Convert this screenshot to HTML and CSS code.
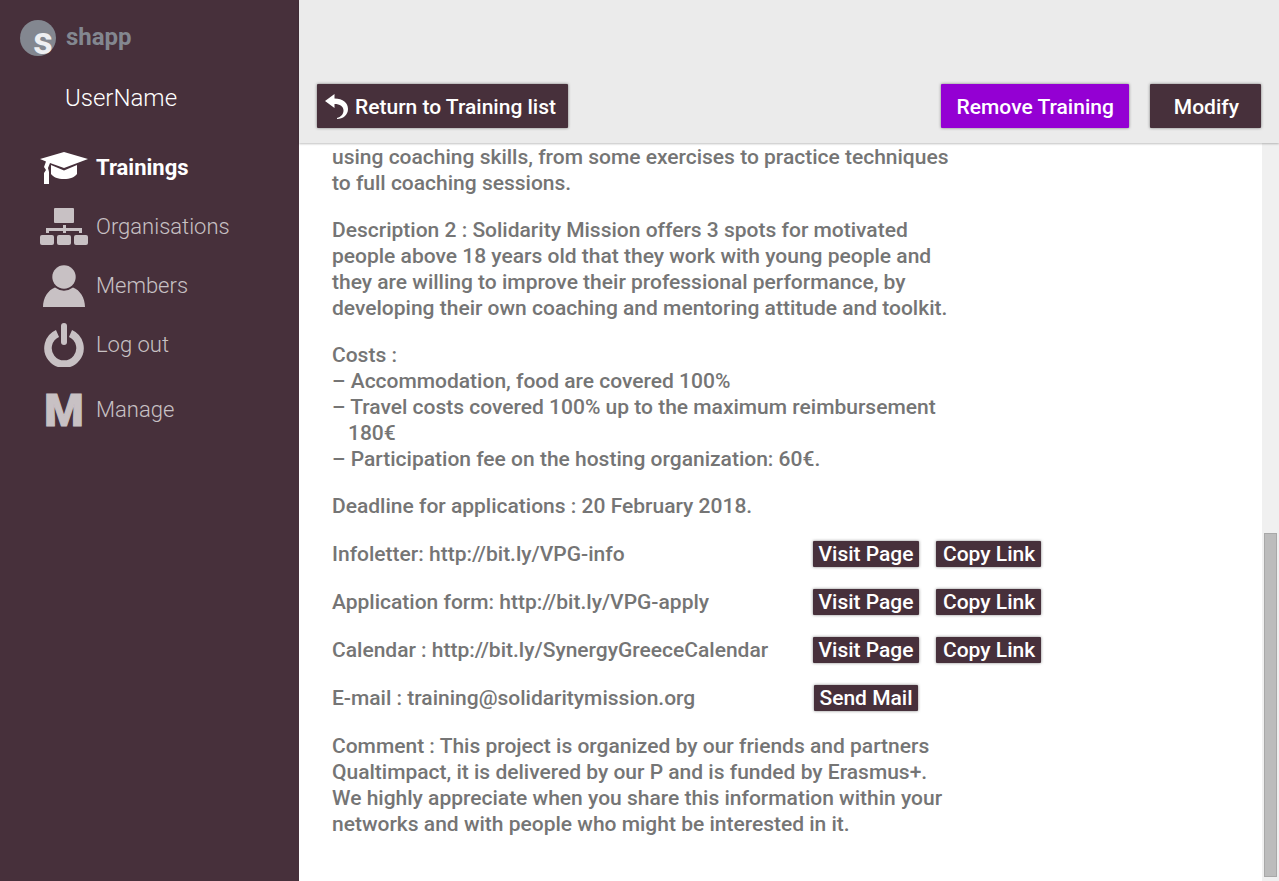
FILE: index.html
```html
<!DOCTYPE html>
<html lang="en">
<head>
<meta charset="utf-8">
<meta name="viewport" content="width=device-width, initial-scale=1">
<title>shapp – Training</title>
<link rel="stylesheet" href="styles.css">
</head>
<body class="app">
<aside class="sidebar">
  <a class="brand" href="#">
    <svg class="brand-logo" viewBox="0 0 36 36" aria-hidden="true">
      <circle cx="18" cy="18" r="18" fill="#838790"/>
      <text x="23" y="34" text-anchor="middle" class="brand-letter">s</text>
    </svg>
    <span class="brand-name">shapp</span>
  </a>
  <div class="user">UserName</div>
  <nav class="nav">
    <a class="nav-item is-active" href="#">
      <svg class="nav-icon" viewBox="0 0 48 44" aria-hidden="true">
        <path d="M0 13 24 6 48 13 24 22 10 17 8 22 9 26V38H4V27L6 24 4 21 6 15.500Z"/>
        <path d="M11 19 24 24.500 37 19V28C35 31 30 33 24 33S13 31 11 28Z"/>
      </svg>
      <span>Trainings</span>
    </a>
    <a class="nav-item" href="#">
      <svg class="nav-icon" viewBox="0 0 48 44" aria-hidden="true">
        <rect x="14" y="3" width="20" height="15" rx="1"/>
        <path d="M23 20h3v3h16v5h-3v-2H26v2h-3v-2H9v2H6v-5h17Z"/>
        <rect x="0" y="30" width="14" height="10" rx="2"/>
        <rect x="17" y="30" width="14" height="10" rx="2"/>
        <rect x="34" y="30" width="14" height="10" rx="2"/>
      </svg>
      <span>Organisations</span>
    </a>
    <a class="nav-item" href="#">
      <svg class="nav-icon" viewBox="0 0 48 44" aria-hidden="true">
        <circle cx="24" cy="13" r="11.7"/>
        <path d="M3 43C3 34 8 26 15 23.500Q24 30 33 23.500C40 26 45 34 45 43Z"/>
      </svg>
      <span>Members</span>
    </a>
    <a class="nav-item" href="#">
      <svg class="nav-icon" viewBox="0 0 48 44" aria-hidden="true">
        <path d="M17.500 10.500A16 16 0 1 0 30.500 10.500" fill="none" stroke="currentColor" stroke-width="7.500"/>
        <path d="M24 1V23" fill="none" stroke="#47303b" stroke-width="10"/>
        <path d="M24 3V19" fill="none" stroke="currentColor" stroke-width="6" stroke-linecap="round"/>
      </svg>
      <span>Log out</span>
    </a>
    <a class="nav-item nav-item-last" href="#">
      <span class="nav-letter" aria-hidden="true">M</span>
      <span>Manage</span>
    </a>
  </nav>
</aside>

<div class="page">
  <header class="toolbar">
    <button class="btn btn-return" type="button">
      <svg class="return-icon" viewBox="0 0 24 26" aria-hidden="true">
        <path d="M0 7 9.500 0V4.500C18 4.500 23 9 23 15C23 21 18 25 12 25V24C16 23 18.500 20 18.500 16.500C18.500 12.500 15 10 9.500 10V14Z" fill="currentColor"/>
      </svg>
      Return to Training list
    </button>
    <button class="btn btn-remove" type="button">Remove Training</button>
    <button class="btn btn-modify" type="button">Modify</button>
  </header>

  <div class="viewport">
    <main class="content">
      <p class="prose">using coaching skills, from some exercises to practice techniques<br>to full coaching sessions.</p>
      <p class="prose">Description 2 : Solidarity Mission offers 3 spots for motivated<br>people above 18 years old that they work with young people and<br>they are willing to improve their professional performance, by<br>developing their own coaching and mentoring attitude and toolkit.</p>
      <div class="prose">
        <p class="line">Costs :</p>
        <ul class="costs">
          <li>– Accommodation, food are covered 100%</li>
          <li>– Travel costs covered 100% up to the maximum reimbursement<br>180€</li>
          <li>– Participation fee on the hosting organization: 60€.</li>
        </ul>
      </div>
      <p class="row">Deadline for applications : 20 February 2018.</p>
      <div class="row">
        <span class="label">Infoletter: http://bit.ly/VPG-info</span>
        <span class="slot"><button class="chip" type="button">Visit Page</button></span>
        <button class="chip chip-copy" type="button">Copy Link</button>
      </div>
      <div class="row">
        <span class="label">Application form: http://bit.ly/VPG-apply</span>
        <span class="slot"><button class="chip" type="button">Visit Page</button></span>
        <button class="chip chip-copy" type="button">Copy Link</button>
      </div>
      <div class="row">
        <span class="label">Calendar : http://bit.ly/SynergyGreeceCalendar</span>
        <span class="slot"><button class="chip" type="button">Visit Page</button></span>
        <button class="chip chip-copy" type="button">Copy Link</button>
      </div>
      <div class="row">
        <span class="label">E-mail : training@solidaritymission.org</span>
        <span class="slot"><button class="chip" type="button">Send Mail</button></span>
      </div>
      <p class="prose">Comment : This project is organized by our friends and partners<br>Qualtimpact, it is delivered by our P and is funded by Erasmus+.<br>We highly appreciate when you share this information within your<br>networks and with people who might be interested in it.</p>
    </main>
    <div class="track"><div class="thumb"></div></div>
  </div>
</div>
</body>
</html>
```
FILE: styles.css
```css
* {
  box-sizing: border-box;
}

.app {
  display: flex;
  min-height: 100vh;
  margin: 0;
  background: #fff;
  color: #757575;
  font-family: Roboto, "Liberation Sans", sans-serif;
  font-size: 21px;
  font-weight: 500;
  line-height: 26px;
}

.sidebar {
  flex: 0 0 299px;
  padding: 20px 20px 0;
  background: #47303b;
}

.brand {
  display: flex;
  align-items: center;
  gap: 10px;
  color: #838790;
  text-decoration: none;
}

.brand-logo {
  width: 36px;
  height: 36px;
  overflow: visible;
}

.brand-letter {
  fill: #eeeff2;
  font-size: 38px;
  font-weight: 700;
}

.brand-name {
  padding-bottom: 2px;
  font-size: 24px;
  font-weight: 700;
}

.user {
  margin-top: 26px;
  padding-left: 45px;
  color: #fff;
  font-size: 24px;
  font-weight: 300;
  line-height: 32px;
}

.nav {
  display: flex;
  flex-direction: column;
  gap: 15px;
  margin-top: 32px;
  padding-left: 20px;
}

.nav-item {
  display: flex;
  align-items: center;
  gap: 8px;
  height: 44px;
  color: #c8c1c4;
  font-size: 22px;
  font-weight: 300;
  text-decoration: none;
}

.nav-item.is-active {
  color: #fff;
  font-weight: 700;
}

.nav-item-last {
  margin-top: 6px;
}

.nav-icon {
  flex: none;
  width: 48px;
  height: 44px;
  fill: currentColor;
}

.nav-letter {
  width: 48px;
  padding-top: 2px;
  font-size: 45px;
  font-weight: 900;
  line-height: 44px;
  text-align: center;
  -webkit-text-stroke: 1px currentColor;
}

.page {
  display: flex;
  flex: 1;
  flex-direction: column;
  min-width: 0;
}

.toolbar {
  display: flex;
  z-index: 1;
  padding: 84px 18px 15px;
  background: #ebebeb;
  box-shadow: 0 1px 2px rgba(0, 0, 0, 0.25);
}

.btn,
.chip {
  border: 0;
  border-radius: 1px;
  background: #47303b;
  box-shadow: 0 0 3px rgba(0, 0, 0, 0.5);
  color: #fff;
  font: inherit;
  white-space: nowrap;
}

.btn {
  height: 44px;
}

.btn-return {
  display: flex;
  align-items: center;
  gap: 6px;
  margin-right: auto;
  padding: 2px 12px 0 8px;
}

.return-icon {
  width: 24px;
  height: 26px;
}

.btn-remove {
  margin-right: 21px;
  padding: 2px 15px 0 16px;
  background: #9400d3;
}

.btn-modify {
  padding: 2px 22px 0 24px;
}

.viewport {
  display: flex;
  flex: 1;
}

.content {
  flex: 1;
  padding: 1px 33px 0;
}

.prose,
.row {
  margin: 0;
}

.prose {
  padding-bottom: 21px;
}

.row {
  display: flex;
  padding-bottom: 22px;
}

.line,
.costs {
  margin: 0;
  padding: 0;
  list-style: none;
}

.costs li {
  padding-left: 16px;
  text-indent: -16px;
}

.label {
  width: 480px;
}

.slot {
  display: flex;
  justify-content: center;
  width: 108px;
}

.chip {
  height: 26px;
  padding: 0 5px;
}

.chip-copy {
  margin-left: 16px;
  padding: 0 6px 0 7px;
}

.track {
  display: flex;
  flex: 0 0 17px;
  flex-direction: column;
  justify-content: flex-end;
  padding: 2px 2px 4px;
  background: #f0f0f0;
}

.thumb {
  height: 47%;
  border: 1px solid #a8a8a8;
  background: #bcbcbc;
}
```
